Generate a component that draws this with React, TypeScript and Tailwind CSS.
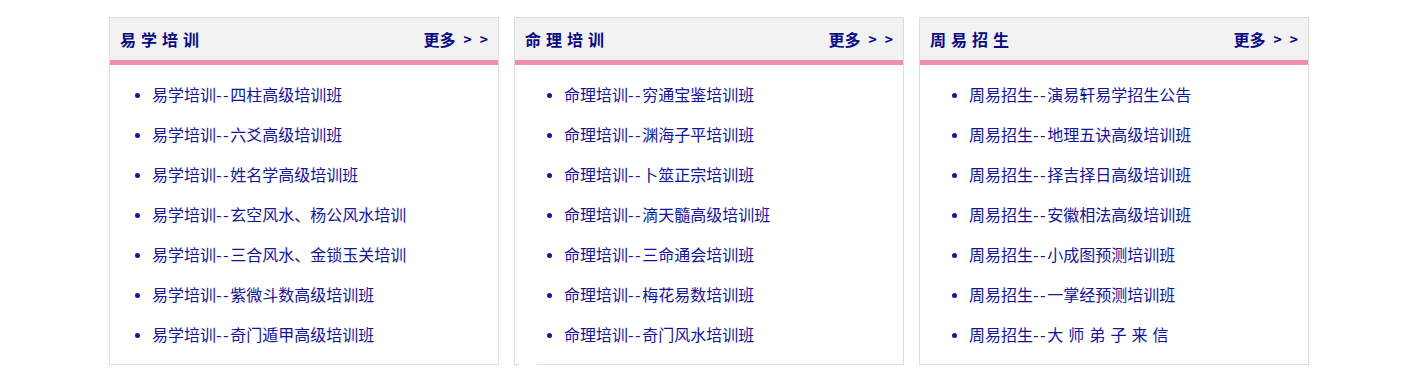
const font = {
  fontFamily: '"Noto Sans CJK SC", "Noto Sans", sans-serif',
};

type Section = { title: string; items: string[]; indent: string };

const sections: Section[] = [
  {
    title: "易学培训",
    indent: "pl-[42px]",
    items: [
      "易学培训--四柱高级培训班",
      "易学培训--六爻高级培训班",
      "易学培训--姓名学高级培训班",
      "易学培训--玄空风水、杨公风水培训",
      "易学培训--三合风水、金锁玉关培训",
      "易学培训--紫微斗数高级培训班",
      "易学培训--奇门遁甲高级培训班",
    ],
  },
  {
    title: "命理培训",
    indent: "pl-[49px]",
    items: [
      "命理培训--穷通宝鉴培训班",
      "命理培训--渊海子平培训班",
      "命理培训--卜筮正宗培训班",
      "命理培训--滴天髓高级培训班",
      "命理培训--三命通会培训班",
      "命理培训--梅花易数培训班",
      "命理培训--奇门风水培训班",
    ],
  },
  {
    title: "周易招生",
    indent: "pl-[49px]",
    items: [
      "周易招生--演易轩易学招生公告",
      "周易招生--地理五诀高级培训班",
      "周易招生--择吉择日高级培训班",
      "周易招生--安徽相法高级培训班",
      "周易招生--小成图预测培训班",
      "周易招生--一掌经预测培训班",
      "周易招生--大 师 弟 子 来 信",
    ],
  },
];

function Item({ text }: { text: string }) {
  const [head, tail] = text.split("--");
  return (
    <li className="h-[40px] text-[16px] leading-[40px] [word-spacing:1.5px]">
      <a>
        {head}
        <span className="tracking-[1.5px]">--</span>
        {tail}
      </a>
    </li>
  );
}

function Panel({ section, gap }: { section: Section; gap?: boolean }) {
  return (
    <div className="relative w-[390px] border border-[#dddddd] bg-white">
      <div className="box-content flex h-[42px] items-center justify-between border-b-[5px] border-[#f18db0] bg-[#f2f2f2] px-[10px]">
        <span className="text-[16px] font-bold tracking-[5px] text-[#0a0a85]">
          {section.title}
        </span>
        <span className="flex items-center text-[16px] font-bold text-[#0a0a85]">
          更多
          <span className="ml-[8px] text-[14px]">&gt;</span>
          <span className="ml-[8px] text-[14px]">&gt;</span>
        </span>
      </div>
      <ul
        className={`list-disc ${section.indent} pt-[9px] pb-[10px] text-[#14149a] marker:text-[13px] marker:text-[#14149a]`}
      >
        {section.items.map((item, idx) => (
          <Item key={idx} text={item} />
        ))}
      </ul>
      {gap && <div className="absolute -bottom-px left-[4px] h-px w-[18px] bg-white" />}
    </div>
  );
}

export default function App() {
  return (
    <div className="h-[375px] w-[1422px] bg-white pt-[17px] pl-[109px]" style={font}>
      <div className="flex gap-[15px]">
        {sections.map((s, i) => (
          <Panel key={i} section={s} gap={i === 1} />
        ))}
      </div>
    </div>
  );
}
